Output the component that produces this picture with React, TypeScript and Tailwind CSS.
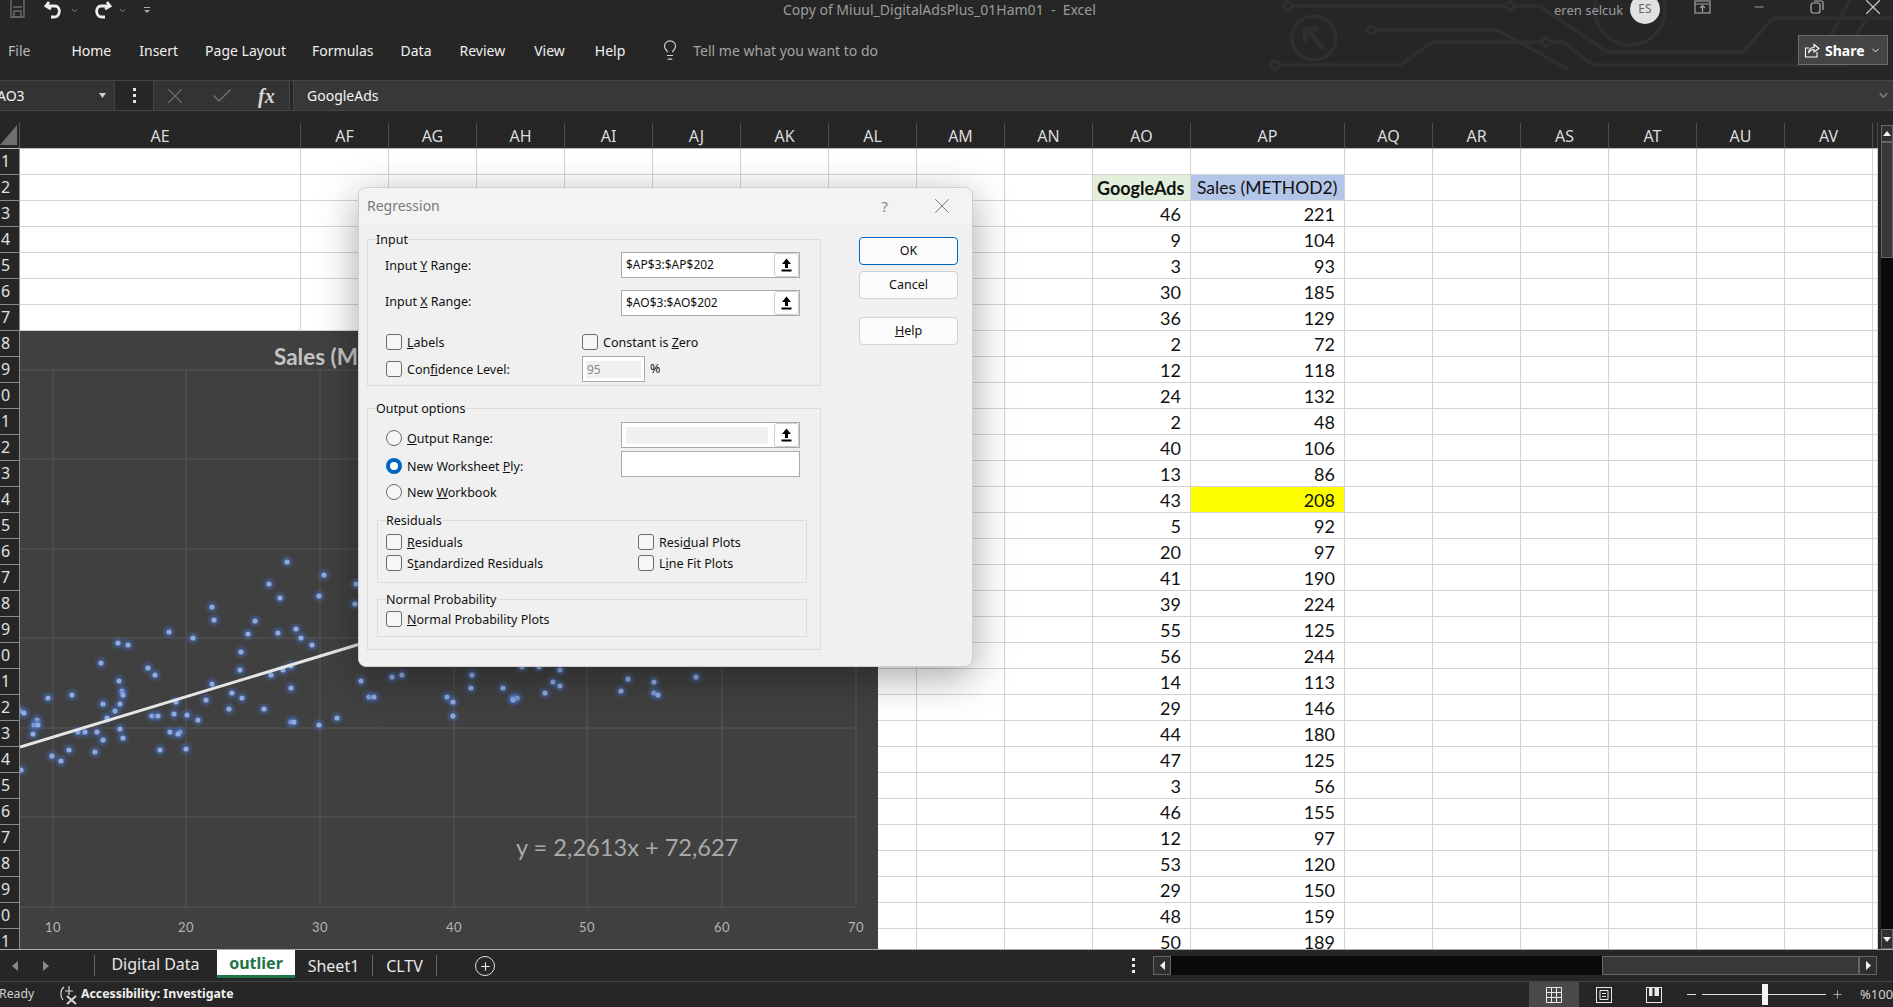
import React from 'react';
import { ChevronDown, Lightbulb, Plus, X, Check, Minus } from 'lucide-react';

const columns = ['AE', 'AF', 'AG', 'AH', 'AI', 'AJ', 'AK', 'AL', 'AM', 'AN', 'AO', 'AP', 'AQ', 'AR', 'AS', 'AT', 'AU', 'AV', ''];
const gridCols = 'grid-cols-[20px_281px_88px_88px_88px_88px_88px_88px_88px_88px_88px_98px_154px_88px_88px_88px_88px_88px_88px_5px]';

const data: [number, number][] = [
  [46, 221], [9, 104], [3, 93], [30, 185], [36, 129], [2, 72], [12, 118], [24, 132], [2, 48], [40, 106],
  [13, 86], [43, 208], [5, 92], [20, 97], [41, 190], [39, 224], [55, 125], [56, 244], [14, 113], [29, 146],
  [44, 180], [47, 125], [3, 56], [46, 155], [12, 97], [53, 120], [29, 150], [48, 159], [50, 189],
];

// dots read off the chart, page coordinates
const dots: [number, number][] = [
  [287, 562], [324, 575], [356, 584], [269, 584], [280, 598], [319, 596], [355, 604], [212, 607], [214, 620], [255, 621],
  [169, 632], [193, 638], [248, 634], [278, 633], [296, 629], [301, 638], [312, 645], [118, 643], [128, 645], [241, 652],
  [101, 663], [148, 668], [155, 675], [240, 670], [283, 670], [291, 666], [271, 675], [119, 681], [212, 684], [361, 681],
  [392, 677], [402, 675], [122, 691], [123, 695], [72, 695], [48, 698], [232, 693], [242, 698], [291, 688], [369, 697],
  [374, 697], [103, 704], [120, 704], [176, 702], [206, 700], [229, 709], [264, 709], [20, 711], [24, 713], [115, 711],
  [107, 718], [152, 716], [158, 716], [174, 714], [187, 715], [198, 720], [37, 720], [34, 725], [38, 725], [291, 722],
  [294, 722], [319, 725], [337, 718], [120, 729], [78, 732], [85, 732], [97, 732], [170, 732], [180, 732], [178, 734],
  [33, 734], [123, 738], [103, 740], [69, 750], [160, 750], [186, 749], [95, 752], [52, 756], [61, 761], [21, 770],
  [472, 675], [471, 688], [503, 688], [522, 667], [539, 667], [560, 670], [553, 682], [560, 686], [545, 693], [447, 697],
  [453, 702], [453, 716], [513, 698], [517, 698], [513, 700], [621, 691], [628, 679], [654, 682], [654, 693], [658, 695],
  [696, 677],
];

const gridX = [53, 186, 320, 454, 587, 722, 856];
const gridY = [370, 459, 549, 638, 728, 817, 907];

function Chart() {
  return (
    <div className="absolute left-[20px] top-[208px] h-[618px] w-[858px] bg-[#404040]">
      <svg viewBox="20 331 858 618" className="h-full w-full">
        {gridX.map((x) => (
          <line key={x} x1={x} x2={x} y1={370} y2={907} stroke="#565656" strokeWidth={1} />
        ))}
        {gridY.map((y) => (
          <line key={y} x1={20} x2={856} y1={y} y2={y} stroke="#565656" strokeWidth={1} />
        ))}
        {dots.map(([x, y], i) => (
          <g key={i}>
            <circle cx={x} cy={y} r={7} fill="#4472c4" opacity={0.14} />
            <circle cx={x} cy={y} r={5} fill="#4472c4" opacity={0.3} />
            <circle cx={x} cy={y} r={2.6} fill="#8faadc" />
          </g>
        ))}
        <line x1={20} y1={747} x2={370} y2={641} stroke="#e6e6e6" strokeWidth={3} />
      </svg>
      <span className="absolute left-[254px] top-[10px] font-['Lato',sans-serif] text-[22.5px] leading-[32px] font-bold text-[#c4c4c4]">Sales (M</span>
      <span className="absolute left-[496px] top-[498px] font-['Lato',sans-serif] text-[23.6px] leading-[36px] text-[#a9a9a9]">y = 2,2613x + 72,627</span>
      {[10, 20, 30, 40, 50, 60, 70].map((n, i) => (
        <span
          key={n}
          style={{ left: gridX[i] - 20 - 20 }}
          className="absolute top-[586px] w-[40px] text-center font-['Lato',sans-serif] text-[13px] leading-[20px] tracking-[0.5px] text-[#b4b4b4]"
        >
          {n}
        </span>
      ))}
    </div>
  );
}

function Group({ title, className, children }: { title: string; className: string; children: React.ReactNode }) {
  return (
    <div className={`relative border border-[#dcdcdc] ${className}`}>
      <span className="absolute -top-[9px] left-[8px] bg-[#f0f0f0] leading-[18px]">{title}</span>
      {children}
    </div>
  );
}

function CheckRow({ children }: { children: React.ReactNode }) {
  return (
    <div className="flex h-[16px] items-center gap-[5px] leading-[18px]">
      <span className="h-[16px] w-[16px] shrink-0 rounded-[3px] border border-[#6b6b6b] bg-[#f6f6f6]" />
      <span className="translate-y-[1px]">{children}</span>
    </div>
  );
}

function RadioRow({ on, className, children }: { on?: boolean; className?: string; children: React.ReactNode }) {
  return (
    <div className={`flex items-center gap-[5px] leading-[18px] ${className ?? ''}`}>
      {on ? (
        <span className="flex h-[16px] w-[16px] items-center justify-center rounded-full bg-[#0067c0]">
          <span className="h-[8px] w-[8px] rounded-full bg-white" />
        </span>
      ) : (
        <span className="h-[16px] w-[16px] rounded-full border border-[#6b6b6b] bg-[#f6f6f6]" />
      )}
      <span className="translate-y-[1px]">{children}</span>
    </div>
  );
}

function RangeInput({ value, disabled }: { value?: string; disabled?: boolean }) {
  return (
    <div className="flex h-[26px] w-[179px] items-center border border-[#a9a9b0] bg-white pl-[4px] text-[12px]">
      {disabled ? <div className="h-[17px] w-[142px] bg-[#f0f0f0]" /> : <span className="flex-1">{value}</span>}
      <div className="ml-auto flex h-[24px] w-[25px] items-center justify-center rounded-[3px] border border-[#cfcfcf] bg-[#fdfdfd]">
        <svg width="11" height="14" viewBox="0 0 11 14">
          <path d="M5.5 0.5 L10 6 H7 V10 H4 V6 H1 Z" fill="#000" />
          <rect x="0.5" y="11.5" width="10" height="2" fill="#000" />
        </svg>
      </div>
    </div>
  );
}

function DialogButton({ primary, children }: { primary?: boolean; children: React.ReactNode }) {
  return (
    <div
      className={`flex h-[28px] w-[99px] items-center justify-center rounded-[4px] bg-[#fbfbfb] ${
        primary ? 'border-[1.5px] border-[#0067c0]' : 'border border-[#cdd2d8]'
      }`}
    >
      {children}
    </div>
  );
}

function RegressionDialog() {
  return (
    <div className="absolute left-[358px] top-[187px] h-[480px] w-[615px] rounded-[8px] border border-[#cfcfcf] bg-[#f0f0f0] font-['Noto_Sans',sans-serif] text-[12.5px] text-[#111] shadow-[0_10px_40px_rgba(0,0,0,0.35)]">
      <div className="flex h-[36px] items-center rounded-t-[8px] bg-[#f3f3f3] pl-[8px] pr-[17px] text-[14px] text-[#7a7a7a]">
        <span className="-translate-y-[1px]">Regression</span>
        <span className="ml-auto mr-[41px] text-[15px] text-[#888]">?</span>
        <X size={26} strokeWidth={0.9} className="text-[#777]" />
      </div>
      <div className="flex pl-[8px] pt-[15px]">
        <div className="w-[454px]">
          <Group title="Input" className="h-[147px] pl-[18px] pr-[20px] pt-[12px]">
            <div className="flex items-center justify-between">
              <span className="-ml-[1px] translate-y-[1px]">Input <u>Y</u> Range:</span>
              <RangeInput value="$AP$3:$AP$202" />
            </div>
            <div className="mt-[12px] flex items-center justify-between">
              <span className="-ml-[1px] -translate-y-[1px]">Input <u>X</u> Range:</span>
              <RangeInput value="$AO$3:$AO$202" />
            </div>
            <div className="mt-[18px] grid grid-cols-[196px_1fr]">
              <CheckRow><u>L</u>abels</CheckRow>
              <CheckRow>Constant is <u>Z</u>ero</CheckRow>
            </div>
            <div className="mt-[6px] grid grid-cols-[196px_1fr] items-center">
              <CheckRow>Con<u>f</u>idence Level:</CheckRow>
              <div className="flex items-center gap-[5px]">
                <div className="flex h-[26px] w-[63px] items-center border border-[#a9a9b0] bg-white p-[3px]">
                  <div className="h-[17px] w-full bg-[#f0f0f0] pl-[1px] text-[12px] leading-[17px] text-[#888]">95</div>
                </div>
                <span>%</span>
              </div>
            </div>
          </Group>
          <Group title="Output options" className="mt-[22px] h-[242px] pl-[9px] pt-[13px]">
            <div className="flex items-start justify-between pl-[9px] pr-[20px]">
              <RadioRow className="mt-[7px]"><u>O</u>utput Range:</RadioRow>
              <RangeInput disabled />
            </div>
            <div className="mt-[3px] flex items-start justify-between pl-[9px] pr-[20px]">
              <RadioRow on className="mt-[6px]">New Worksheet <u>P</u>ly:</RadioRow>
              <div className="h-[26px] w-[179px] border border-[#a9a9b0] bg-white" />
            </div>
            <div className="mt-[6px] pl-[9px]">
              <RadioRow>New <u>W</u>orkbook</RadioRow>
            </div>
            <Group title="Residuals" className="mt-[19px] h-[63px] w-[430px] pl-[8px] pt-[13px]">
              <div className="grid grid-cols-[252px_1fr] gap-y-[5px]">
                <CheckRow><u>R</u>esiduals</CheckRow>
                <CheckRow>Resi<u>d</u>ual Plots</CheckRow>
                <CheckRow>S<u>t</u>andardized Residuals</CheckRow>
                <CheckRow>L<u>i</u>ne Fit Plots</CheckRow>
              </div>
            </Group>
            <Group title="Normal Probability" className="mt-[16px] h-[38px] w-[430px] pl-[8px] pt-[11px]">
              <CheckRow><u>N</u>ormal Probability Plots</CheckRow>
            </Group>
          </Group>
        </div>
        <div className="-mt-[2px] ml-[38px] flex flex-col gap-[6px]">
          <DialogButton primary>OK</DialogButton>
          <DialogButton>Cancel</DialogButton>
          <div className="mt-[12px]">
            <DialogButton><span><u>H</u>elp</span></DialogButton>
          </div>
        </div>
      </div>
    </div>
  );
}

function CircuitPattern() {
  return (
    <svg className="absolute left-[1270px] top-0 h-[80px] w-[623px]" viewBox="1270 0 623 80" fill="none" stroke="#2f2f2f" strokeWidth={3.5}>
      <circle cx={1288} cy={6} r={4} />
      <path d="M1292 6 H1506 M1514 6 H1540 L1607 52 H1743 L1773 18 H1893" />
      <circle cx={1510} cy={6} r={4} />
      <circle cx={1371} cy={30} r={4} />
      <path d="M1375 30 H1497 L1568 69" />
      <circle cx={1275} cy={65} r={4} />
      <path d="M1279 65 H1400 L1433 42 H1542 M1550 42 H1563 L1593 65 H1850" />
      <circle cx={1546} cy={42} r={4} />
      <circle cx={1314} cy={38} r={22} />
      <path d="M1305 29 H1318 M1305 29 V42 M1305 29 L1324 48" strokeWidth={5} />
      <circle cx={1630} cy={10} r={35} />
      <path d="M1850 0 L1815 65 M1880 0 L1835 65" />
    </svg>
  );
}

function TitleBar() {
  return (
    <div className="relative flex h-[20px] items-center text-[#9b9b9b]">
      <svg width="18" height="22" viewBox="0 0 18 22" className="ml-[9px] -mt-[2px]" fill="none" stroke="#6a6a6a" strokeWidth={1.5}>
        <path d="M2 0 V19 H15 V0" />
        <rect x="5" y="13" width="7" height="6" />
        <path d="M4 9 H13" />
      </svg>
      <svg width="20" height="20" viewBox="0 0 20 20" className="ml-[17px]" fill="none" stroke="#ededed" strokeWidth={2.8}>
        <path d="M5 2 L2 6 L7 9" />
        <path d="M3 6 H11 C17 6 17 17 10 17 H7" />
      </svg>
      <ChevronDown size={9} className="ml-[6px] text-[#999]" />
      <svg width="20" height="20" viewBox="0 0 20 20" className="ml-[13px]" fill="none" stroke="#ededed" strokeWidth={2.8}>
        <path d="M15 2 L18 6 L13 9" />
        <path d="M17 6 H9 C3 6 3 17 10 17 H13" />
      </svg>
      <ChevronDown size={9} className="ml-[6px] text-[#999]" />
      <svg width="8" height="8" viewBox="0 0 8 8" className="ml-[16px]" fill="#aaa">
        <rect x="1" y="1" width="6" height="1" />
        <path d="M1 4 H7 L4 7 Z" />
      </svg>
      <span className="absolute left-[783px] top-0 text-[14px] leading-[20px]">Copy of Miuul_DigitalAdsPlus_01Ham01&nbsp; -&nbsp; Excel</span>
      <span className="absolute left-[1554px] top-0 text-[13px] leading-[20px]">eren selcuk</span>
      <div className="absolute left-[1630px] -top-[6px] flex h-[30px] w-[30px] items-center justify-center rounded-full bg-[#e1e1e1] text-[12px] text-[#666]">ES</div>
      <svg width="17" height="14" viewBox="0 0 17 14" className="absolute left-[1694px] top-0" fill="none" stroke="#a0a0a0" strokeWidth={1.2}>
        <rect x="1" y="1" width="15" height="12" />
        <path d="M1 4 H16 M8.5 12 V6 M6 8 L8.5 5.5 L11 8" />
      </svg>
      <Minus size={14} strokeWidth={1.2} className="absolute left-[1752px] top-0 text-[#ccc]" />
      <svg width="14" height="14" viewBox="0 0 14 14" className="absolute left-[1810px] top-0" fill="none" stroke="#b0b0b0" strokeWidth={1.2}>
        <rect x="1" y="3" width="9" height="10" rx="2" />
        <path d="M4 1 H11 C12 1 13 2 13 3 V10" />
      </svg>
      <X size={26} strokeWidth={1} className="absolute left-[1860px] -top-[6px] text-[#c8c8c8]" />
    </div>
  );
}

function RibbonTabs() {
  const tabs = [
    { name: 'Home', cls: '' },
    { name: 'Insert', cls: 'ml-[28px]' },
    { name: 'Page Layout', cls: 'ml-[27px]' },
    { name: 'Formulas', cls: 'ml-[26px]' },
    { name: 'Data', cls: 'ml-[27px]' },
    { name: 'Review', cls: 'ml-[28px]' },
    { name: 'View', cls: 'ml-[29px]' },
    { name: 'Help', cls: 'ml-[30px]' },
  ];
  return (
    <div className="relative flex h-[60px] items-center pl-[8px] text-[14px] text-[#f0f0f0]">
      <span className="mr-[41px] text-[#b9b9b9]">File</span>
      <div className="flex">
        {tabs.map((t) => (
          <span key={t.name} className={t.cls}>{t.name}</span>
        ))}
      </div>
      <Lightbulb size={22} strokeWidth={1.3} className="ml-[34px] text-[#d0d0d0]" />
      <span className="ml-[12px] text-[#a4a4a4]">Tell me what you want to do</span>
      <div className="absolute left-[1798px] top-[15px] flex h-[30px] w-[90px] items-center gap-[5px] border border-[#6d6d6d] bg-[#444444] pl-[5px] text-white">
        <svg width="16" height="16" viewBox="0 0 16 16" fill="none" stroke="#fff" strokeWidth={1.1}>
          <path d="M5 6 H1.5 V15 H13 V10" />
          <path d="M4.5 11 C5 7.5 7 5.5 10 5.5 V2.5 L15 6.5 L10 10 V7.5 C8 7.5 6 8.5 4.5 11 Z" />
        </svg>
        <span className="font-bold">Share</span>
        <ChevronDown size={11} strokeWidth={2} />
      </div>
    </div>
  );
}

function FormulaBar() {
  return (
    <div className="relative flex h-[31px] items-stretch border-y border-[#444444] text-[14px] text-[#f4f4f4]">
      <div className="flex w-[115px] items-center justify-between border-r border-[#444444] bg-[#333333] pr-[8px]">
        <span className="-ml-[3px]">AO3</span>
        <svg width="7" height="5" viewBox="0 0 7 5" fill="#d0d0d0"><path d="M0 0 H7 L3.5 5 Z" /></svg>
      </div>
      <div className="flex w-[38px] items-center justify-center">
        <svg width="3" height="15" viewBox="0 0 3 15" fill="#e4e4e4">
          <rect width="3" height="3" /><rect y="6" width="3" height="3" /><rect y="12" width="3" height="3" />
        </svg>
      </div>
      <div className="flex w-[137px] items-center border-x border-[#444444] bg-[#333333] pl-[8px]">
        <X size={26} strokeWidth={1.2} className="text-[#6b6b6b]" />
        <Check size={24} strokeWidth={1.7} className="ml-[22px] text-[#6b6b6b]" />
        <span className="ml-[24px] font-['Liberation_Serif',serif] text-[20px] font-bold italic text-[#d8d8d8]">fx</span>
      </div>
      <div className="ml-[3px] flex flex-1 items-center border-l border-[#444444] bg-[#383838] pl-[13px] pr-[3px]">
        <span>GoogleAds</span>
        <ChevronDown size={13} strokeWidth={3} className="ml-auto text-[#7a7a7a]" />
      </div>
    </div>
  );
}

function Sheet() {
  return (
    <div className="relative h-[826px] w-[1878px] overflow-hidden">
      <div className={`grid h-[26px] ${gridCols} items-stretch border-b border-[#b8b8b8] font-['Noto_Sans',sans-serif] text-[16px] text-[#dcdcdc]`}>
        <div className="relative border-r border-[#555]">
          <svg width="18" height="24" viewBox="0 0 18 24" className="absolute left-0 top-0">
            <path d="M17 2 V22 H0 Z" fill="#6f6f6f" />
          </svg>
        </div>
        {columns.map((c, i) => (
          <div key={i} className="flex items-center justify-center border-r border-[#4e4e4e] leading-none">{c}</div>
        ))}
      </div>
      <div className={`grid auto-rows-[26px] ${gridCols} bg-white font-['Lato',sans-serif] text-[18px] leading-[26px] text-[#111]`}>
        {Array.from({ length: 31 }, (_, r) => (
          <React.Fragment key={r}>
            <div className="border-b border-r border-[#8a8a8a] bg-[#262626] pl-[1px] font-['Noto_Sans',sans-serif] text-[16px] leading-[25px] text-[#e0e0e0]">
              {(r + 1) % 10}
            </div>
            {columns.map((c, i) => {
              let content: React.ReactNode = null;
              let cls = '';
              if (r === 1 && c === 'AO') {
                content = 'GoogleAds';
                cls = 'bg-[#e2efda] pl-[4px] font-bold';
              } else if (r === 1 && c === 'AP') {
                content = 'Sales (METHOD2)';
                cls = 'bg-[#b4c6e7] pl-[6px] text-[17.5px]';
              } else if (r >= 2 && c === 'AO') {
                content = data[r - 2][0];
                cls = 'pr-[9px] text-right';
              } else if (r >= 2 && c === 'AP') {
                content = data[r - 2][1];
                cls = `pr-[9px] text-right ${data[r - 2][1] === 208 ? 'bg-[#ffff00]' : ''}`;
              }
              return (
                <div key={i} className={`overflow-hidden whitespace-nowrap border-b border-r border-[#d4d4d4] ${cls}`}>
                  {content}
                </div>
              );
            })}
          </React.Fragment>
        ))}
      </div>
      <Chart />
    </div>
  );
}

function VerticalScroll() {
  return (
    <div className="ml-[3px] flex h-[826px] w-[12px] flex-col pt-[2px]">
      <div className="flex h-[18px] items-center justify-center border border-b-2 border-[#666] bg-[#303030]">
        <svg width="8" height="5" viewBox="0 0 8 5" fill="#f0f0f0"><path d="M4 0 L8 5 H0 Z" /></svg>
      </div>
      <div className="h-[115px] border-x border-b border-[#666] bg-[#383838]" />
      <div className="flex-1 bg-[#0a0a0a]" />
      <div className="flex h-[20px] items-center justify-center border border-[#666] bg-[#303030]">
        <svg width="8" height="5" viewBox="0 0 8 5" fill="#f0f0f0"><path d="M0 0 H8 L4 5 Z" /></svg>
      </div>
    </div>
  );
}

function SheetTabs() {
  return (
    <div className="flex h-[32px] items-start border-t border-[#a8a8a8] font-['Noto_Sans',sans-serif] text-[16px] text-[#e8e8e8]">
      <div className="mt-[5px] flex h-[21px] w-[95px] items-center border-r border-[#666] pl-[12px]">
        <svg width="6" height="10" viewBox="0 0 6 10" fill="#8a8a8a"><path d="M6 0 V10 L0 5 Z" /></svg>
        <svg width="6" height="10" viewBox="0 0 6 10" fill="#8a8a8a" className="ml-[25px]"><path d="M0 0 V10 L6 5 Z" /></svg>
      </div>
      <div className="flex h-[28px] w-[122px] items-center justify-center pr-[1px]">Digital Data</div>
      <div className="flex h-[28px] w-[78px] items-center justify-center border-b-[3px] border-[#217346] bg-white font-bold text-[#217346]">outlier</div>
      <div className="mt-[5px] flex h-[21px] w-[78px] items-center justify-center border-r border-[#666]">Sheet1</div>
      <div className="mt-[5px] flex h-[21px] w-[64px] items-center justify-center border-r border-[#666]">CLTV</div>
      <div className="ml-[38px] mt-[6px] flex h-[20px] w-[20px] items-center justify-center rounded-full border border-[#e0e0e0]">
        <Plus size={13} strokeWidth={2} className="text-[#f0f0f0]" />
      </div>
      <div className="ml-[628px] mt-[8px] flex h-[15px] w-[20px] flex-col items-center justify-between">
        <span className="h-[3px] w-[3px] bg-[#e8e8e8]" />
        <span className="h-[3px] w-[3px] bg-[#e8e8e8]" />
        <span className="h-[3px] w-[3px] bg-[#e8e8e8]" />
      </div>
      <div className="ml-[10px] mt-[6px] flex h-[19px] w-[724px]">
        <div className="flex w-[18px] items-center justify-center border border-[#666] bg-[#303030]">
          <svg width="5" height="9" viewBox="0 0 5 9" fill="#f0f0f0"><path d="M5 0 V9 L0 4.5 Z" /></svg>
        </div>
        <div className="w-[431px] bg-[#0a0a0a]" />
        <div className="flex-1 border border-[#666] bg-[#383838]" />
        <div className="flex w-[18px] items-center justify-center border border-[#666] bg-[#303030]">
          <svg width="5" height="9" viewBox="0 0 5 9" fill="#f0f0f0"><path d="M0 0 V9 L5 4.5 Z" /></svg>
        </div>
      </div>
    </div>
  );
}

function StatusBar() {
  return (
    <div className="flex h-[26px] items-center border-t border-[#444444] font-['Noto_Sans',sans-serif] text-[12.3px] text-[#d0d0d0]">
      <span className="w-[59px] -ml-[1px]">Ready</span>
      <svg width="21" height="20" viewBox="0 0 21 20" fill="none" stroke="#d8d8d8" strokeWidth={1.2}>
        <path d="M6 2 C2 5 2 11 5 15" />
        <path d="M11 1 V5 M7 6 H15 M11 5 V10" />
        <path d="M9 11 L18 19 M18 11 L9 19" strokeWidth={1.8} />
      </svg>
      <span className="ml-[2px] font-bold text-[#f0f0f0]">Accessibility: Investigate</span>
      <div className="ml-auto flex h-full items-center">
        <div className="flex h-full w-[50px] items-center justify-center bg-[#4a4a4a]">
          <svg width="16" height="16" viewBox="0 0 16 16" fill="none" stroke="#e8e8e8" strokeWidth={1}>
            <path d="M.5 .5 H15.5 V15.5 H.5 Z M5.5 .5 V15.5 M10.5 .5 V15.5 M.5 5.5 H15.5 M.5 10.5 H15.5" />
          </svg>
        </div>
        <div className="flex h-full w-[50px] items-center justify-center">
          <svg width="16" height="16" viewBox="0 0 16 16" fill="none" stroke="#e8e8e8" strokeWidth={1}>
            <rect x=".5" y=".5" width="15" height="15" />
            <path d="M4 3.5 H12 V12.5 H4 Z M6 6.5 H10 M6 9.5 H10" />
          </svg>
        </div>
        <div className="flex h-full w-[50px] items-center justify-center">
          <svg width="16" height="16" viewBox="0 0 16 16" fill="none" stroke="#e8e8e8" strokeWidth={1}>
            <rect x=".5" y=".5" width="15" height="15" />
            <path d="M3 1 H6.5 V9 H3 Z M8.5 1 H13 V9 H8.5 Z" fill="#e8e8e8" stroke="none" />
          </svg>
        </div>
        <span className="ml-[8px] h-[1.5px] w-[9px] bg-[#e0e0e0]" />
        <div className="relative ml-[6px] h-[1.5px] w-[124px] bg-[#e0e0e0]">
          <span className="absolute -top-[10px] left-[60px] h-[21px] w-[6px] bg-[#f4f4f4]" />
        </div>
        <Plus size={13} strokeWidth={1.2} className="ml-[5px] text-[#e0e0e0]" />
        <span className="ml-[16px] w-[33px] text-[13px]">%100</span>
      </div>
    </div>
  );
}

export default function App() {
  return (
    <div className="relative h-[1007px] w-[1893px] overflow-hidden bg-[#262626] font-['Noto_Sans',sans-serif]">
      <CircuitPattern />
      <TitleBar />
      <RibbonTabs />
      <FormulaBar />
      <div className="h-[12px]" />
      <div className="flex">
        <Sheet />
        <VerticalScroll />
      </div>
      <SheetTabs />
      <StatusBar />
      <RegressionDialog />
    </div>
  );
}
